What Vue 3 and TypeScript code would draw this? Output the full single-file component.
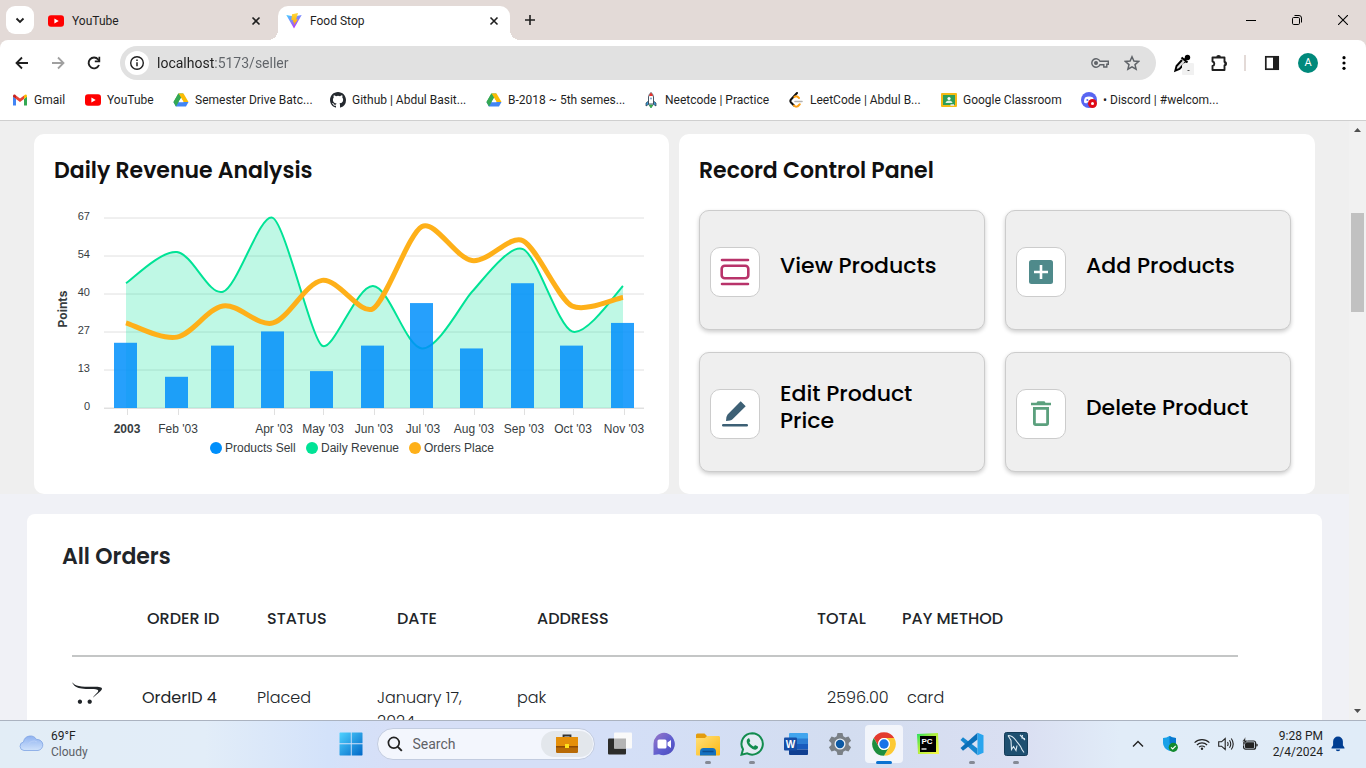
<script setup lang="ts">
type Point = [number, number]

interface Order {
  id: string
  status: string
  date: string
  address: string
  total: string
  method: string
}

const bookmarks = [
  { icon: 'gmail', label: 'Gmail' },
  { icon: 'youtube', label: 'YouTube' },
  { icon: 'drive', label: 'Semester Drive Batc...' },
  { icon: 'github', label: 'Github | Abdul Basit...' },
  { icon: 'drive', label: 'B-2018 ~ 5th semes...' },
  { icon: 'rocket', label: 'Neetcode | Practice' },
  { icon: 'leetcode', label: 'LeetCode | Abdul B...' },
  { icon: 'classroom', label: 'Google Classroom' },
  { icon: 'discord', label: '• Discord | #welcom...' },
]

const actions = [
  { icon: 'view', label: 'View Products' },
  { icon: 'add', label: 'Add Products' },
  { icon: 'edit', label: 'Edit Product Price' },
  { icon: 'delete', label: 'Delete Product' },
]

const orders: Order[] = [
  { id: 'OrderID 4', status: 'Placed', date: 'January 17, 2024', address: 'pak', total: '2596.00', method: 'card' },
]

const apps = [
  { name: 'Task View', icon: 'taskview', running: false, active: false },
  { name: 'Chat', icon: 'chat', running: false, active: false },
  { name: 'File Explorer', icon: 'files', running: true, active: false },
  { name: 'WhatsApp', icon: 'whatsapp', running: true, active: false },
  { name: 'Word', icon: 'word', running: false, active: false },
  { name: 'Settings', icon: 'settings', running: false, active: false },
  { name: 'Chrome', icon: 'chrome', running: false, active: true },
  { name: 'PyCharm', icon: 'pycharm', running: false, active: false },
  { name: 'Visual Studio Code', icon: 'vscode', running: true, active: false },
  { name: 'MySQL Workbench', icon: 'mysql', running: true, active: false },
]

/* Chart geometry */
const baseY = 208
const unit = 190 / 67
const xs = [72, 123, 169, 219, 268, 319, 368, 418, 469, 518, 569]
const sold = [23, 11, 22, 27, 13, 22, 37, 21, 44, 22, 30]
const revenue = [44, 55, 41, 67, 22, 43, 21, 41, 56, 27, 43]
const placed = [30, 25, 36, 30, 45, 35, 64, 52, 59, 36, 39]
const yTicks = [67, 54, 40, 27, 13, 0]
const xTicks = [
  { x: 73, label: '2003' },
  { x: 124, label: "Feb '03" },
  { x: 220, label: "Apr '03" },
  { x: 269, label: "May '03" },
  { x: 320, label: "Jun '03" },
  { x: 369, label: "Jul '03" },
  { x: 420, label: "Aug '03" },
  { x: 470, label: "Sep '03" },
  { x: 519, label: "Oct '03" },
  { x: 570, label: "Nov '03" },
]
const legend = [
  { x: 162, color: '#008ffb', label: 'Products Sell' },
  { x: 258, color: '#00e396', label: 'Daily Revenue' },
  { x: 361, color: '#feb019', label: 'Orders Place' },
]

const toPoints = (values: number[]): Point[] => values.map((v, i) => [xs[i], baseY - v * unit])
const slope = (a: Point, b: Point) => (b[1] - a[1]) / (b[0] - a[0])

/* Smooth cubic path through the given points */
function spline(values: number[]): string {
  const p = toPoints(values)
  const n = p.length - 1
  const m: number[] = p.map((_, i) => {
    if (i === 0) return slope(p[0], p[1])
    if (i === n) return slope(p[n - 1], p[n])
    return (slope(p[i - 1], p[i]) + slope(p[i], p[i + 1])) / 2
  })
  for (let i = 0; i < n; i++) {
    const d = slope(p[i], p[i + 1])
    if (Math.abs(d) < 1e-6) {
      m[i] = m[i + 1] = 0
      continue
    }
    const a = m[i] / d
    const b = m[i + 1] / d
    const s = a * a + b * b
    if (s > 9) {
      const k = (d * 3) / Math.sqrt(s)
      m[i] = k * a
      m[i + 1] = k * b
    }
  }
  const t = p.map((_, i): Point => {
    const s = (p[Math.min(n, i + 1)][0] - p[Math.max(0, i - 1)][0]) / (6 * (1 + m[i] * m[i]))
    return [s, m[i] * s]
  })
  let path = `M${p[0][0]} ${p[0][1]}`
  for (let i = 1; i <= n; i++) {
    path += `C${p[i - 1][0] + t[i - 1][0]} ${p[i - 1][1] + t[i - 1][1]} ${p[i][0] - t[i][0]} ${p[i][1] - t[i][1]} ${p[i][0]} ${p[i][1]}`
  }
  return path
}

const revenuePath = spline(revenue)
const revenueArea = `${revenuePath}L${xs[xs.length - 1]} ${baseY}L${xs[0]} ${baseY}Z`
const placedPath = spline(placed)
</script>

<template>
  <div class="desktop">
    <header class="tabstrip">
      <button class="tab-search" aria-label="Search tabs">
        <svg width="12" height="12" viewBox="0 0 12 12"><path d="M2.500 4.500 6 8l3.500-3.500" fill="none" stroke="#1f1f1f" stroke-width="1.800" /></svg>
      </button>
      <div class="tab">
        <svg width="16" height="16" viewBox="0 0 16 16"><rect y="2.300" width="16" height="11.500" rx="3" fill="#f00" /><path d="M6.400 5.600v5L10.700 8z" fill="#fff" /></svg>
        <span class="tab-title">YouTube</span>
        <button class="tab-close" aria-label="Close YouTube"><svg width="10" height="10" viewBox="0 0 10 10"><path d="m1.500 1.500 7 7m0-7-7 7" stroke="#1f1f1f" stroke-width="1.600" /></svg></button>
      </div>
      <div class="tab active">
        <svg width="16" height="16" viewBox="0 0 16 16">
          <defs>
            <linearGradient id="viteA" x1="0" y1="0" x2="0.600" y2="1"><stop offset="0" stop-color="#41d1ff" /><stop offset="1" stop-color="#bd34fe" /></linearGradient>
            <linearGradient id="viteB" x1="0" y1="0" x2="0" y2="1"><stop offset="0" stop-color="#ffd83a" /><stop offset="1" stop-color="#ffa800" /></linearGradient>
          </defs>
          <path d="M.3 2 8 15.500 15.700 2 8 3.400z" fill="url(#viteA)" /><path d="M12 0 6 1.200 5.300 7.300l2-.3-.5 2.600 1.600-.5L7.600 12.500l4.500-6.300-2 .3z" fill="url(#viteB)" />
        </svg>
        <span class="tab-title">Food Stop</span>
        <button class="tab-close" aria-label="Close Food Stop"><svg width="10" height="10" viewBox="0 0 10 10"><path d="m1.500 1.500 7 7m0-7-7 7" stroke="#1f1f1f" stroke-width="1.600" /></svg></button>
      </div>
      <button class="new-tab" aria-label="New tab"><svg width="12" height="12" viewBox="0 0 12 12"><path d="M6 1v10M1 6h10" stroke="#1f1f1f" stroke-width="1.600" /></svg></button>
      <div class="window-controls">
        <button aria-label="Minimize"><svg width="10" height="10" viewBox="0 0 10 10"><path d="M0 5.500h10" stroke="#000" /></svg></button>
        <button aria-label="Restore"><svg width="10" height="10" viewBox="0 0 10 10" fill="none" stroke="#000"><rect x=".5" y="2.500" width="7" height="7" rx="1.200" /><path d="M2.500.5h4.500a2.500 2.500 0 0 1 2.500 2.500v4.500" /></svg></button>
        <button aria-label="Close"><svg width="10" height="10" viewBox="0 0 10 10"><path d="m0 0 10 10M10 0 0 10" stroke="#000" stroke-width="1.100" /></svg></button>
      </div>
    </header>

    <nav class="toolbar" aria-label="Browser toolbar">
      <button class="tool" aria-label="Back"><svg width="16" height="16" viewBox="0 0 16 16"><path d="M14 8H3M8 2.500 2.500 8 8 13.500" fill="none" stroke="#1f1f1f" stroke-width="1.800" /></svg></button>
      <button class="tool" aria-label="Forward"><svg width="16" height="16" viewBox="0 0 16 16"><path d="M2 8h11M8 2.500 13.500 8 8 13.500" fill="none" stroke="#a0a0a0" stroke-width="1.800" /></svg></button>
      <button class="tool" aria-label="Reload"><svg width="16" height="16" viewBox="0 0 16 16"><path d="M13 10a5.400 5.400 0 1 1-.8-5.500L13.500 6" fill="none" stroke="#1f1f1f" stroke-width="1.900" /><path d="M14.200 1.800v5.400H8.800V5.500h3.700V1.800z" fill="#1f1f1f" /></svg></button>
      <div class="omnibox">
        <button class="site-info" aria-label="View site information">
          <svg width="16" height="16" viewBox="0 0 16 16"><circle cx="8" cy="8" r="6.300" fill="none" stroke="#1f1f1f" stroke-width="1.400" /><path d="M8 7.200v4M8 4.500V6" stroke="#1f1f1f" stroke-width="1.500" /></svg>
        </button>
        <input class="address" type="text" aria-label="Address" value="localhost:5173/seller" />
        <button class="omni-tool" aria-label="Passwords"><svg width="18" height="12" viewBox="0 0 18 12" fill="none" stroke="#5f6368" stroke-width="1.400"><path d="M9 4.200h8.300v3h-1.500V10h-3V7.800H9a4.300 4.300 0 1 1 0-3.600z" /><circle cx="5" cy="6" r="1.300" fill="#5f6368" /></svg></button>
        <button class="omni-tool" aria-label="Bookmark this tab"><svg width="16" height="16" viewBox="0 0 16 16"><path d="m8 1.800 1.900 4.300 4.700.4-3.600 3.100 1.100 4.600L8 11.800l-4.100 2.400L5 9.600 1.400 6.500l4.700-.4z" fill="none" stroke="#5f6368" stroke-width="1.500" /></svg></button>
      </div>
      <button class="tool" aria-label="Color picker">
        <svg width="24" height="24" viewBox="0 0 24 24"><path d="M12 9 6.500 15l-1.200 4.700L9.500 18l6-6.500" fill="#ddd" stroke="#000" stroke-width="1.900" /><path d="m11.500 6.500 6 5M14.500 9l2.500-3" stroke="#000" stroke-width="2.200" /><circle cx="17.500" cy="6.500" r="2.700" /><rect x="12" y="12" width="13" height="13" rx="3" fill="#f1f1f1" /><path d="M17.500 19.500h2" stroke="#555" /></svg>
      </button>
      <button class="tool" aria-label="Extensions"><svg width="20" height="20" viewBox="-1 0 20 20"><path d="M3.500 4.500h12V9a1.800 1.800 0 0 1 0 3.500v4.500h-12V13a2.300 2.300 0 0 0 0-4.500z" fill="none" stroke="#1f1f1f" stroke-width="1.900" stroke-linejoin="round" /><path d="M7.200 4.500a2.400 2.400 0 0 1 4.800 0zM15.500 8.300a2.400 2.400 0 0 1 0 4.800z" fill="#1f1f1f" /></svg></button>
      <span class="divider"></span>
      <button class="tool" aria-label="Side panel"><svg width="16" height="16" viewBox="0 0 16 16"><rect x="1.800" y="1.800" width="12.400" height="12.400" fill="none" stroke="#1f1f1f" stroke-width="1.700" /><path d="M9 1.500h5.500v13H9z" fill="#1f1f1f" /></svg></button>
      <button class="tool" aria-label="Profile"><span class="avatar">A</span></button>
      <button class="tool" aria-label="Menu"><svg width="4" height="16" viewBox="0 0 4 16"><circle cx="2" cy="2.700" r="1.600" /><circle cx="2" cy="8" r="1.600" /><circle cx="2" cy="13.300" r="1.600" /></svg></button>
    </nav>

    <nav class="bookmarks" aria-label="Bookmarks">
      <a v-for="b in bookmarks" :key="b.label" href="#" class="bookmark">
        <svg width="16" height="16" viewBox="0 0 16 16" aria-hidden="true">
          <g v-if="b.icon === 'gmail'"><path d="M1 13.500h3V7L1 4.500z" fill="#4285f4" /><path d="M12 13.500h3v-9L12 7z" fill="#34a853" /><path d="M12 3.500V7l3-2.300V4c0-1.500-1.500-2-2.500-1z" fill="#fbbc04" /><path d="M1 4v.8L4 7V3.500L3.500 3C2.500 2 1 2.700 1 4z" fill="#c5221f" /><path d="M4 3.500V7l4 3 4-3V3.500l-4 3z" fill="#ea4335" /></g>
          <g v-else-if="b.icon === 'youtube'"><rect y="2.300" width="16" height="11.500" rx="3" fill="#f00" /><path d="M6.400 5.600v5L10.700 8z" fill="#fff" /></g>
          <g v-else-if="b.icon === 'drive'"><path d="M5.300 1.500h5L3 14.500.5 10z" fill="#34a853" /><path d="M5.500 1.500h5L15.500 10h-5z" fill="#fbbc04" /><path d="M3 10h12.500L13 14.500H3L.5 10z" fill="#4285f4" /><path d="M5.500 1.500 8 6l-2.500 4.200L3 14.500.5 10z" fill="#34a853" /><path d="M8 6 5.500 10.200h5z" fill="#fff" /></g>
          <path v-else-if="b.icon === 'github'" d="M8 0C3.580 0 0 3.580 0 8c0 3.540 2.290 6.530 5.470 7.590.4.070.55-.17.55-.38 0-.19-.01-.82-.01-1.490-2.010.37-2.530-.49-2.690-.94-.09-.23-.48-.94-.82-1.130-.28-.15-.68-.52-.01-.53.63-.01 1.080.58 1.230.82.72 1.210 1.870.87 2.330.66.07-.52.28-.87.51-1.070-1.780-.2-3.640-.89-3.640-3.950 0-.87.31-1.590.82-2.150-.08-.2-.36-1.020.08-2.120 0 0 .67-.21 2.200.82a7.420 7.420 0 0 1 4 0c1.530-1.040 2.200-.82 2.200-.82.44 1.100.16 1.920.08 2.120.51.56.82 1.270.82 2.150 0 3.070-1.870 3.750-3.650 3.950.29.25.54.73.54 1.480 0 1.070-.01 1.930-.01 2.200 0 .21.15.46.55.38A8.010 8.010 0 0 0 16 8c0-4.420-3.580-8-8-8z" fill="#24292f" />
          <g v-else-if="b.icon === 'rocket'"><path d="M5.500 9 3 11v3l3-2zM10.500 9l2.500 2v3l-3-2z" fill="#3aa0dc" stroke="#234" stroke-width=".7" /><path d="M5.500 12V5Q6 2 8 .5 10 2 10.500 5v7z" fill="#fff" stroke="#345" stroke-width=".9" /><path d="M6 4Q6.500 2 8 .5 9.500 2 10 4z" fill="#e5322d" /><circle cx="8" cy="6.500" r="1.100" fill="#8ac" /><path d="M6 13h4l-2 3z" fill="#4cc83b" stroke="#175" stroke-width=".6" /></g>
          <g v-else-if="b.icon === 'leetcode'" fill="none" stroke-linecap="round"><path d="M9 1 3 7.500Q1.700 9 3 10.500l3 3" stroke="#111" stroke-width="2" /><path d="m11 6-1-.9Q8 3.500 6.400 5M6 13.500Q8.500 16 11 13l.8-.8" stroke="#ffa116" stroke-width="2" /><path d="M7 9.500h7" stroke="#b3b3b3" stroke-width="1.600" /></g>
          <g v-else-if="b.icon === 'classroom'"><rect y="1" width="16" height="14" rx="1" fill="#f5ba15" /><rect x="2" y="3" width="12" height="10" fill="#2f9e58" /><circle cx="8" cy="6.500" r="1.600" fill="#fff" /><path d="M4.500 11q.5-2.500 3.500-2.500t3.500 2.500z" fill="#dff2e4" /><path d="M9.500 12.300h3.500v1.500H9.500z" fill="#eee" /></g>
          <g v-else><circle cx="8" cy="8" r="8" fill="#5865f2" /><path d="M4 5.500q4-2.200 8 0 1.300 2.500 1 5l-2.300 1-.7-1H6l-.7 1-2.300-1q-.3-2.500 1-5z" fill="#fff" /><circle cx="6.300" cy="8" r="1" fill="#5865f2" /><circle cx="11.500" cy="11.500" r="4.500" fill="#e00b17" /><circle cx="11.500" cy="11.500" r="1.500" fill="#fff" /></g>
        </svg>
        <span>{{ b.label }}</span>
      </a>
    </nav>

    <div class="viewport">
      <main class="page">
        <section class="overview">
          <article class="card">
            <h2>Daily Revenue Analysis</h2>
            <svg class="chart" viewBox="0 0 595 262" preserveAspectRatio="xMinYMin meet" role="img" aria-label="Daily revenue chart">
              <g stroke="#e0e0e0">
                <path v-for="(t, i) in yTicks" :key="t" :d="`M50 ${18 + i * 38}H590`" />
                <path d="M50 208.500H590" />
                <path v-for="t in xTicks" :key="t.x" :d="`M${t.x + 0.5} 209v6`" />
              </g>
              <path :d="revenueArea" fill="#00e396" fill-opacity=".25" />
              <path :d="revenuePath" fill="none" stroke="#00e396" stroke-width="2" />
              <rect v-for="(v, i) in sold" :key="i" :x="xs[i] - 12" :y="baseY - v * unit" width="23" :height="v * unit" fill="#008ffb" fill-opacity=".85" />
              <path :d="placedPath" fill="none" stroke="#feb019" stroke-width="5" />
              <g class="y-labels">
                <text v-for="(t, i) in yTicks" :key="t" x="36" :y="20 + i * 38">{{ t }}</text>
              </g>
              <text class="y-title" transform="translate(13 109) rotate(-90)">Points</text>
              <g class="x-labels">
                <text v-for="t in xTicks" :key="t.x" :x="t.x" y="233" :class="{ year: t.label === '2003' }">{{ t.label }}</text>
              </g>
              <g v-for="l in legend" :key="l.label" class="legend">
                <circle :cx="l.x" cy="248" r="6" :fill="l.color" />
                <text :x="l.x + 9" y="252">{{ l.label }}</text>
              </g>
            </svg>
          </article>

          <article class="card controls">
            <h2>Record Control Panel</h2>
            <div class="actions">
              <button v-for="a in actions" :key="a.label" class="action">
                <span class="action-icon">
                  <svg width="30" height="30" viewBox="0 0 30 30" aria-hidden="true">
                    <g v-if="a.icon === 'view'" fill="none" stroke="#b8336a" stroke-width="2.600" stroke-linecap="round"><path d="M2 3h26M2 27h26" /><rect x="1.700" y="8.700" width="26.600" height="12.600" rx="3" /></g>
                    <g v-else-if="a.icon === 'add'"><rect x="3" y="3" width="24" height="24" rx="2.500" fill="#4f8a8b" /><path d="M15 8v14M8 15h14" stroke="#fff" stroke-width="2.600" /></g>
                    <g v-else-if="a.icon === 'edit'" fill="#3d6075"><path d="m20.700 2.300 5 5L12.500 20.300Q10.800 22 6 22q0-4.500 1.600-6.400z" /><rect x="2" y="25" width="26" height="2.500" rx="1.200" /></g>
                    <g v-else fill="#5ba07d"><path d="M5 3.700h5.500l1-1.500h7l1 1.500H25v2.600H5z" /><path fill-rule="evenodd" d="M7 8h16v16.300a2.700 2.700 0 0 1-2.700 2.700H9.700A2.700 2.700 0 0 1 7 24.300zm2.800 2.800v13.400h10.400V10.800z" /></g>
                  </svg>
                </span>
                <span class="action-label">{{ a.label }}</span>
              </button>
            </div>
          </article>
        </section>

        <section class="orders">
          <h2>All Orders</h2>
          <table>
            <colgroup><col class="c-icon" /><col class="c-id" /><col class="c-status" /><col class="c-date" /><col class="c-address" /><col class="c-total" /><col /></colgroup>
            <thead>
              <tr><td></td><th class="h-id">ORDER ID</th><th class="h-status">STATUS</th><th class="h-wide">DATE</th><th class="h-wide">ADDRESS</th><th>TOTAL</th><th class="h-id">PAY METHOD</th></tr>
            </thead>
            <tbody>
              <tr v-for="o in orders" :key="o.id">
                <td>
                  <svg width="30" height="24" viewBox="0 0 640 512" aria-hidden="true"><path fill="#212529" d="M423.300 440.700c0 25.300-20.300 45.600-45.600 45.600s-45.800-20.300-45.800-45.600 20.600-45.800 45.800-45.800c25.400 0 45.600 20.500 45.600 45.800zm-253.900-45.800c-25.300 0-45.600 20.600-45.600 45.800s20.300 45.600 45.600 45.600 45.800-20.300 45.800-45.600-20.500-45.800-45.800-45.800zm291.700-270C158.900 124.900 81.900 112.100 0 25.700c34.400 51.700 53.300 148.900 373.100 144.200 333.300-5 130 86.100 70.800 188.900 186.700-166.700 319.400-233.900 17.200-233.900z" /></svg>
                </td>
                <td class="order-id">{{ o.id }}</td>
                <td>{{ o.status }}</td>
                <td class="date">{{ o.date }}</td>
                <td>{{ o.address }}</td>
                <td class="inset">{{ o.total }}</td>
                <td class="inset">{{ o.method }}</td>
              </tr>
            </tbody>
          </table>
        </section>
      </main>
      <div class="scrollbar" aria-hidden="true">
        <svg width="17" height="17" viewBox="0 0 17 17"><path d="m5 11 3.500-4L12 11z" fill="#505050" /></svg>
        <div class="track"><div class="thumb"></div></div>
        <svg width="17" height="17" viewBox="0 0 17 17"><path d="m5 6 3.500 4L12 6z" fill="#505050" /></svg>
      </div>
    </div>

    <footer class="taskbar">
      <div class="weather">
        <svg width="26" height="20" viewBox="0 0 26 20">
          <defs><linearGradient id="cloud" x1="0" y1="0" x2="0" y2="1"><stop offset="0" stop-color="#8fb2f0" /><stop offset="1" stop-color="#cfe2fb" /></linearGradient></defs>
          <path d="M6 16.500a4.300 4.300 0 0 1-.5-8.500A7 7 0 0 1 18.500 5.500a5.500 5.500 0 0 1 1.500 11z" fill="url(#cloud)" stroke="#7fa3e3" stroke-width=".8" /><path d="M10 11a6 6 0 0 1 9-3" fill="none" stroke="#b9d0f8" />
        </svg>
        <div class="weather-text"><span>69°F</span><span class="muted">Cloudy</span></div>
      </div>
      <div class="dock">
        <button class="slot" aria-label="Start">
          <svg width="24" height="24" viewBox="0 0 24 24"><defs><linearGradient id="win" x1="0" y1="0" x2="1" y2="1"><stop offset="0" stop-color="#50d2ff" /><stop offset="1" stop-color="#0067c7" /></linearGradient></defs><path d="M1 .5h10.800v10.800H.5V1zM12.700.5H23l.5.5v10.300H12.700zM.5 12.200h11.300V23.500H1L.5 23zM12.700 12.200h10.800V23l-.5.500H12.700z" fill="url(#win)" /></svg>
        </button>
        <div class="search">
          <svg width="16" height="16" viewBox="0 0 16 16"><circle cx="6.800" cy="6.800" r="5.400" fill="none" stroke="#222" stroke-width="1.700" /><path d="m10.800 10.800 4 4" stroke="#222" stroke-width="1.900" /></svg>
          <input type="search" placeholder="Search" aria-label="Search" />
          <span class="search-highlight">
            <svg width="24" height="20" viewBox="0 0 24 20"><path d="M8.500 4V1.500h7V4" fill="none" stroke="#333" stroke-width="1.800" /><rect x="1" y="3" width="22" height="16" rx="1.200" fill="#b86a06" /><path d="M2 3h20q1 0 1 1v8H1V4q0-1 1-1z" fill="#e58f09" /><path d="M1 12h22v1.500H1z" fill="#8c4a05" /><rect x="10" y="10" width="4" height="4" fill="#ffe11a" /></svg>
          </span>
        </div>
        <button v-for="a in apps" :key="a.name" class="slot" :class="{ current: a.active, running: a.running }" :aria-label="a.name">
          <svg width="24" height="24" viewBox="0 0 24 24" aria-hidden="true">
            <g v-if="a.icon === 'taskview'"><rect x="0" y="6.500" width="18" height="16" rx="1" fill="#2d2d2b" /><rect x="6" y=".5" width="18" height="16" rx="1" fill="#fafafa" /><path d="M6 6.500h12v10H6z" fill="#b4b4b4" /></g>
            <g v-else-if="a.icon === 'chat'"><defs><linearGradient id="chat" x1="0" y1="0" x2="1" y2="1"><stop offset="0" stop-color="#9a78c8" /><stop offset=".6" stop-color="#5b5ccf" /><stop offset="1" stop-color="#4c4aba" /></linearGradient></defs><path d="M12 .8A11.200 11.200 0 1 1 7 22.200L1.500 23V12A11 11 0 0 1 12 .8z" fill="url(#chat)" /><rect x="5.500" y="7.500" width="9" height="9" rx="1.500" fill="#fff" /><path d="m15.500 10.500 3.500-2.500v8l-3.500-2.500z" fill="#fff" /></g>
            <g v-else-if="a.icon === 'files'"><defs><linearGradient id="folder" x1="0" y1="0" x2="1" y2="1"><stop offset="0" stop-color="#ffe07a" /><stop offset="1" stop-color="#fdb813" /></linearGradient></defs><path d="M1.500 1.500h7l2.500 2.500h11q1.500 0 1.500 1.500V10H0V3q0-1.500 1.500-1.500z" fill="#e39c0e" /><path d="M0 6h9l2-2h11.500Q24 4 24 5.500v17q0 1-1 1H1q-1 0-1-1z" fill="url(#folder)" /><path d="M4 23.500V20q0-4 3.500-4h9q3.500 0 3.500 4v3.500z" fill="#1571c0" /><path d="M6.500 19.500h11" stroke="#0b4f92" stroke-width="1.500" /></g>
            <g v-else-if="a.icon === 'whatsapp'"><path d="M12.200 1.200a10.700 10.700 0 1 1-5 20.200L1.500 22.700l1.500-5.400a10.700 10.700 0 0 1 9.200-16.100z" fill="#f3faf6" fill-opacity=".5" stroke="#128c4e" stroke-width="2" /><path d="M8.500 6.200c-3 1.500-2 5.800 1.300 8.800 3.200 3 7.200 3.800 8.200.6.200-.8 0-1-.5-1.300l-2-1c-.5-.2-.7 0-1.400 1-.4.400-2.300-.5-3.600-2s-1.300-2-.8-2.500c.7-.7.6-1 .3-1.600l-.7-1.600c-.2-.4-.4-.5-.8-.4z" fill="#128c4e" /></g>
            <g v-else-if="a.icon === 'word'"><path d="M6 1h17q1 0 1 1v5H5V2q0-1 1-1z" fill="#41a5ee" /><path d="M5 6.500h19V12H5z" fill="#2b7cd3" /><path d="M5 12h19v5.500H5z" fill="#185abd" /><path d="M5 17.500h19V22q0 1-1 1H6q-1 0-1-1z" fill="#103f91" /><rect x="0" y="5.500" width="13" height="13" rx="1" fill="#174ea6" /><text x="6.500" y="16" class="glyph">W</text></g>
            <g v-else-if="a.icon === 'settings'"><path d="m9.500 1 5 0 .8 3.300 2 1.100 3.200-1 2.600 4.300-2.400 2.300v2l2.400 2.300-2.600 4.300-3.200-1-2 1.100-.8 3.300h-5l-.8-3.300-2-1.100-3.200 1L.9 15.300 3.300 13v-2L.9 8.700l2.600-4.300 3.200 1 2-1.100z" fill="#7a8086" /><circle cx="12" cy="12" r="5.500" fill="#e9eef4" /><circle cx="12" cy="12" r="4.200" fill="#0c59a4" /></g>
            <g v-else-if="a.icon === 'chrome'"><circle cx="12" cy="12" r="11.800" fill="#fff" /><path d="M1.780 6.100A11.800 11.800 0 0 1 22.220 6.100H12A5.900 5.900 0 0 0 6.890 14.950z" fill="#e33b2e" /><path d="M22.220 6.100A11.800 11.800 0 0 1 12 23.800L17.110 14.950A5.900 5.900 0 0 0 12 6.100z" fill="#fcc934" /><path d="M12 23.800A11.800 11.800 0 0 1 1.780 6.100L6.890 14.950A5.900 5.900 0 0 0 17.110 14.950z" fill="#1e8e3e" /><circle cx="12" cy="12" r="5.900" fill="#fff" /><circle cx="12" cy="12" r="4.700" fill="#1a73e8" /></g>
            <g v-else-if="a.icon === 'pycharm'"><defs><linearGradient id="pyc" x1="0" y1="0" x2="1" y2="1"><stop offset="0" stop-color="#20e060" /><stop offset=".4" stop-color="#a8ee3c" /><stop offset="1" stop-color="#fcf84a" /></linearGradient></defs><path d="M1 2 22 1l1 21H2z" fill="url(#pyc)" /><rect x="4" y="4" width="16" height="16" /><text x="11" y="12" class="glyph small">PC</text><path d="M5.500 17h5" stroke="#fff" stroke-width="1.300" /></g>
            <g v-else-if="a.icon === 'vscode'"><path d="M17.500 5.500v13L8 12z" fill="#d9e1f3" /><path d="M3 5.200 17.500 16.500v6.800L.5 8z" fill="#1787cf" /><path d="M17.500.7v6.800L3 18.800.5 16z" fill="#0b6fb8" /><path d="m17.500.7 6 2.600v17.400l-6 2.600z" fill="#2aa5ee" /></g>
            <g v-else><rect x=".5" y=".5" width="23" height="23" rx="2" fill="#1e4f70" stroke="#143b57" /><path d="M4 3.500c4 0 6 2 8 5s5 5 6 9l2 3M4 3.500l3 5 .5 9 2-3 2.500 4 1-5M16 3l5 5M18.500 3l-.5 3 3 .5" fill="none" stroke="#dce9f2" stroke-width="1.100" /></g>
          </svg>
        </button>
      </div>
      <div class="tray">
        <button class="tray-wide" aria-label="Show hidden icons"><svg width="12" height="8" viewBox="0 0 12 8"><path d="m1 6.500 5-5 5 5" fill="none" stroke="#222" stroke-width="1.400" /></svg></button>
        <button class="tray-wide" aria-label="Security"><svg width="16" height="16" viewBox="0 0 16 16"><path d="M7.500 0q3 2 6.500 2v5q0 5-6.500 8Q1 12 1 7V2q3.500 0 6.500-2z" fill="#1aa1e8" /><path d="M7.500 0q3 2 6.500 2v5.500H7.500z" fill="#0878cf" /><circle cx="11.300" cy="11.300" r="4.600" fill="#128a2e" /><path d="m9 11.400 1.700 1.600 3-3.200" fill="none" stroke="#fff" stroke-width="1.200" /></svg></button>
        <button class="status-group" aria-label="Network, sound and battery">
          <svg width="16" height="12" viewBox="0 0 16 12"><g fill="none" stroke="#222" stroke-width="1.100"><path d="M.6 4.700a10.500 10.500 0 0 1 14.800 0M2.900 7a7.200 7.200 0 0 1 10.200 0M5.100 9.200a4.100 4.100 0 0 1 5.800 0" /></g><circle cx="8" cy="10.700" r="1.200" fill="#222" /></svg>
          <svg width="16" height="14" viewBox="0 0 16 14" fill="none" stroke="#222" stroke-width="1.100"><path d="M.7 4.800h2.800L7.200 1.500v11L3.500 9.200H.7zM9.500 5q1.200 2 0 4M11.500 3.200q2.500 3.800 0 7.600M13.300 1.500q3.800 5.500 0 11" /></svg>
          <svg width="16" height="14" viewBox="0 0 16 14"><rect x="1.600" y="4" width="12" height="8.200" rx="2" fill="none" stroke="#222" stroke-width="1.200" /><rect x="3" y="5.300" width="9.200" height="5.600" rx=".7" fill="#222" /><path d="M14.300 6.500q1.500 0 1.500 1.500t-1.500 1.500z" fill="#222" /><path d="M3.500 0 .3 4.500h2L1.500 8.500 5.500 3.500H3.300z" fill="#222" stroke="#e2edf8" stroke-width=".4" /></svg>
        </button>
        <div class="clock"><span>9:28 PM</span><span>2/4/2024</span></div>
        <button class="bell" aria-label="Notifications"><svg width="14" height="16" viewBox="0 0 14 16"><path d="M7 .5a4.900 4.900 0 0 1 4.900 4.900v3.800l1.600 2.600v.7H.5v-.7l1.600-2.600V5.400A4.900 4.900 0 0 1 7 .5zM4.800 13.500h4.400a2.200 1.800 0 0 1-4.400 0z" fill="#003e92" /></svg></button>
      </div>
    </footer>
  </div>
</template>

<style>
body {
  margin: 0;
  overflow: hidden;
}
</style>

<style scoped>
.desktop {
  display: flex;
  flex-direction: column;
  height: 100vh;
  font-family: "Segoe UI", Roboto, "Open Sans", sans-serif;
  font-size: 12px;
  color: #1f1f1f;
  background: #e3dad7;
}
.desktop *,
.desktop *::before,
.desktop *::after {
  box-sizing: border-box;
}
svg {
  display: block;
  flex: none;
}
button {
  display: flex;
  align-items: center;
  justify-content: center;
  padding: 0;
  border: 0;
  background: none;
  font: inherit;
  color: inherit;
}
input {
  min-width: 0;
  padding: 0;
  border: 0;
  outline: 0;
  background: none;
  font: inherit;
}

/* Tab strip */
.tabstrip {
  display: flex;
  flex: none;
  height: 40px;
  padding-left: 6px;
}
.tab-search {
  width: 28px;
  height: 28px;
  margin: 6px 6px 0 0;
  border-radius: 9px;
  background: #fff;
}
.tab {
  position: relative;
  display: flex;
  align-items: center;
  width: 232px;
  height: 34px;
  margin: 6px 6px 0 0;
  padding: 0 8px 5px;
  gap: 8px;
}
.tab.active {
  border-radius: 10px 10px 0 0;
  background: #fff;
}
.tab.active::before,
.tab.active::after {
  content: "";
  position: absolute;
  bottom: 0;
  width: 10px;
  height: 10px;
}
.tab.active::before {
  right: 100%;
  background: radial-gradient(circle at 0 0, transparent 10px, #fff 10px);
}
.tab.active::after {
  left: 100%;
  background: radial-gradient(circle at 100% 0, transparent 10px, #fff 10px);
}
.tab-title {
  flex: 1;
}
.tab-close {
  width: 16px;
  height: 16px;
}
.new-tab {
  width: 28px;
  height: 28px;
  margin-top: 6px;
}
.window-controls {
  display: flex;
  margin-left: auto;
}
.window-controls button {
  width: 46px;
}

/* Toolbar */
.toolbar {
  display: flex;
  flex: none;
  align-items: center;
  height: 46px;
  padding: 0 4px;
  border-radius: 8px 8px 0 0;
  background: #fff;
}
.tool {
  flex: none;
  width: 36px;
  height: 34px;
}
.omnibox {
  display: flex;
  flex: 1;
  align-items: center;
  height: 34px;
  margin: 0 8px;
  padding: 0 8px 0 5px;
  border-radius: 17px;
  background: #e1e1e1;
}
.site-info {
  width: 24px;
  height: 24px;
  margin-right: 8px;
  border-radius: 12px;
  background: #fff;
}
.address {
  flex: 1;
  height: 24px;
  font-size: 14px;
  color: transparent;
  background: linear-gradient(90deg, #1f1f1f 57px, #5f6368 57px);
  background-clip: text;
  -webkit-background-clip: text;
}
.omni-tool {
  width: 32px;
  height: 28px;
}
.divider {
  width: 2px;
  height: 16px;
  margin: 0 8px;
  background: #e3dad7;
}
.avatar {
  width: 20px;
  height: 20px;
  border-radius: 10px;
  line-height: 20px;
  font-size: 11px;
  color: #fff;
  background: #00897b;
}

/* Bookmarks */
.bookmarks {
  display: grid;
  flex: none;
  grid-template-columns: 73px 88px 157px 156px 157px 145px 153px 140px 1fr;
  align-items: center;
  height: 35px;
  padding: 0 12px 6px;
  border-bottom: 1px solid #cfcfcf;
  background: #fff;
}
.bookmark {
  display: flex;
  align-items: center;
  gap: 6px;
  color: #1f1f1f;
  text-decoration: none;
  white-space: nowrap;
}

/* Page */
.viewport {
  display: flex;
  flex: 1;
  min-height: 0;
  overflow: hidden;
}
.page {
  flex: 1;
  min-width: 0;
  overflow: hidden;
  font-family: Poppins, Inter, sans-serif;
  background: #f0f1f6;
}
.overview {
  display: grid;
  grid-template-columns: 635fr 636fr;
  gap: 10px;
  padding: 13px 34px 0;
  background: #efefef;
}
.card {
  padding: 20px;
  border-radius: 10px;
  background: #fff;
}
.controls {
  padding-right: 24px;
  padding-bottom: 22px;
}
h2 {
  margin: 0;
  font-size: 22px;
  font-weight: 600;
  line-height: 33px;
  color: #111;
}
.chart {
  width: 100%;
  height: 262px;
  margin-top: 13px;
  font-family: "Liberation Sans", Arial, sans-serif;
  font-size: 12px;
  fill: #373d3f;
}
.y-labels {
  font-size: 11px;
  text-anchor: end;
}
.y-title {
  font-family: Inter, sans-serif;
  font-size: 12px;
  font-weight: 700;
  text-anchor: middle;
}
.x-labels {
  text-anchor: middle;
}
.year {
  font-weight: 700;
}
.actions {
  display: grid;
  grid-template-columns: 1fr 1fr;
  gap: 22px 20px;
  margin-top: 23px;
}
.action {
  justify-content: flex-start;
  gap: 20px;
  height: 120px;
  padding: 4px 20px 0 10px;
  border: 1px solid #ccc;
  border-radius: 10px;
  background: #efefef;
  box-shadow: 0 2px 4px rgba(0, 0, 0, 0.2);
  text-align: left;
  color: #000;
}
.action-icon {
  display: flex;
  flex: none;
  align-items: center;
  justify-content: center;
  width: 50px;
  height: 50px;
  border: 1px solid #ccc;
  border-radius: 10px;
  background: #fff;
}
.action-label {
  margin-bottom: 14px;
  font-size: 22px;
  font-weight: 500;
  line-height: 27px;
}
.orders {
  margin: 20px 27px 0;
  padding: 26px 84px 26px 35px;
  border-radius: 8px;
  background: #fff;
  color: #212529;
}
.orders h2 {
  color: #212529;
}
table {
  width: calc(100% - 10px);
  margin: 20px 0 0 10px;
  table-layout: fixed;
  border-collapse: collapse;
  font-size: 16px;
  line-height: 24px;
}
th,
td {
  padding: 0;
  text-align: left;
  vertical-align: top;
}
thead tr {
  height: 63px;
  border-bottom: 2px solid #c4c6c6;
}
th {
  padding-top: 14px;
  font-weight: 500;
}
.h-id {
  padding-left: 5px;
}
.h-status {
  padding-left: 10px;
}
.h-wide {
  padding-left: 20px;
}
tbody td {
  padding-top: 29px;
  font-weight: 300;
}
tbody td:first-child {
  padding-top: 24px;
}
tbody .order-id {
  font-weight: 400;
}
.date {
  padding-right: 40px;
}
.inset {
  padding-left: 10px;
}
.c-icon {
  width: 70px;
}
.c-id {
  width: 115px;
}
.c-status {
  width: 120px;
}
.c-date {
  width: 140px;
}
.c-address {
  width: 300px;
}
.c-total {
  width: 80px;
}
.scrollbar {
  display: flex;
  flex: none;
  flex-direction: column;
  width: 17px;
  background: #f1f1f1;
}
.track {
  flex: 1;
  padding: 75px 2px 0;
}
.thumb {
  height: 99px;
  background: #c1c1c1;
}

/* Taskbar */
.taskbar {
  display: grid;
  flex: none;
  grid-template-columns: 1fr auto 1fr;
  align-items: center;
  height: 48px;
  padding-bottom: 1px;
  border-top: 1px solid #abb3c0;
  background: linear-gradient(90deg, #e2edf6 0%, #e2edf8 15%, #d3e2fa 24%, #d7dff7 29%, #d4dff7 45%, #d3ddf0 62%, #dadff2 75%, #e1ecf8 82%, #e0ecf8 100%);
}
.weather {
  display: flex;
  align-items: center;
  gap: 7px;
  padding-left: 18px;
}
.weather-text,
.clock {
  display: flex;
  flex-direction: column;
  line-height: 16px;
}
.muted {
  color: #5b6066;
}
.dock {
  display: flex;
  align-items: center;
}
.slot {
  position: relative;
  width: 44px;
  height: 46px;
}
.slot.current::before {
  content: "";
  position: absolute;
  inset: 4px 3px;
  border-radius: 4px;
  background: rgba(255, 255, 255, 0.7);
}
.slot svg {
  position: relative;
}
.slot.current::after,
.slot.running::after {
  content: "";
  position: absolute;
  bottom: 3px;
  left: 19px;
  width: 6px;
  height: 3px;
  border-radius: 2px;
  background: #858a95;
}
.slot.current::after {
  left: 14px;
  width: 16px;
  background: #0a72d0;
}
.glyph {
  font-family: "Liberation Sans", Arial, sans-serif;
  font-size: 10px;
  font-weight: 700;
  text-anchor: middle;
  fill: #fff;
}
.glyph.small {
  font-size: 8px;
}
.search {
  display: flex;
  align-items: center;
  width: 218px;
  height: 32px;
  margin: 0 3px 0 4px;
  padding: 0 1px 0 9px;
  border: 1px solid #c2cce0;
  border-radius: 16px;
  background: #f3f6fd;
}
.search input {
  flex: 1;
  margin-left: 10px;
  font-size: 14px;
}
.search input::placeholder {
  color: #5f6166;
  opacity: 1;
}
.search-highlight {
  display: flex;
  align-items: center;
  justify-content: center;
  width: 52px;
  height: 26px;
  border-radius: 13px;
  background: #e3e7ec;
}
.tray {
  display: flex;
  align-items: center;
  justify-content: flex-end;
  padding-right: 21px;
}
.tray-wide {
  width: 32px;
  height: 32px;
}
.status-group {
  gap: 8px;
  height: 32px;
  margin: 0 4px 0 8px;
}
.clock {
  width: 61px;
  text-align: right;
}
.bell {
  width: 14px;
  margin-left: 8px;
}
</style>
